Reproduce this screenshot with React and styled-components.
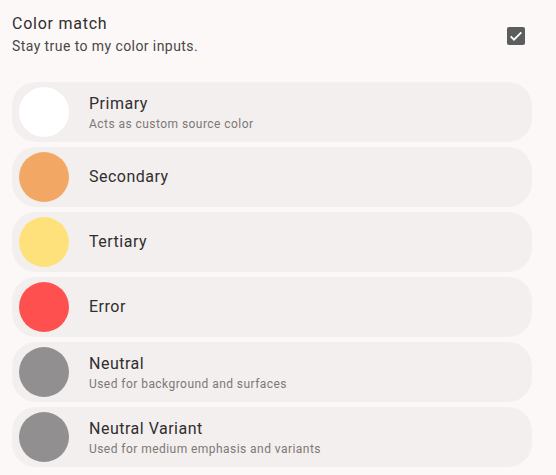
import React from "react";
import styled, { createGlobalStyle } from "styled-components";

const Global = createGlobalStyle`
  html, body { margin: 0; padding: 0; background: #fcf8f7; }
  body { font-family: Roboto, "Noto Sans", sans-serif; }
`;

const Page = styled.div`
  width: 556px;
  height: 475px;
  box-sizing: border-box;
  padding: 12px 24px 0 12px;
  background: #fcf8f7;
  overflow: hidden;
`;

const Header = styled.div`
  display: flex;
  align-items: flex-start;
  justify-content: space-between;
  height: 44px;
  box-sizing: border-box;
  margin-bottom: 26px;
`;

const HeaderText = styled.div`
  display: flex;
  flex-direction: column;
`;

const HeaderTitle = styled.div`
  font-size: 16px;
  line-height: 24px;
  letter-spacing: 0.75px;
  color: #302e2e;
`;

const HeaderSub = styled.div`
  font-size: 14px;
  line-height: 20px;
  letter-spacing: 0.42px;
  color: #4a4646;
`;

const Check = styled.div`
  width: 18px;
  height: 18px;
  margin-top: 15px;
  margin-right: 7px;
  border-radius: 2px;
  background: #5c5e5e;
  display: flex;
  align-items: center;
  justify-content: center;
`;

const List = styled.div`
  display: flex;
  flex-direction: column;
  gap: 5px;
`;

const Row = styled.div`
  display: flex;
  align-items: center;
  height: 60px;
  box-sizing: border-box;
  padding: 0 7px;
  border-radius: 24px;
  background: #f3efee;
`;

const Swatch = styled.div`
  width: 50px;
  height: 50px;
  border-radius: 50%;
  flex-shrink: 0;
  background: ${(p) => p.$color};
`;

const RowText = styled.div`
  display: flex;
  flex-direction: column;
  margin-left: 20px;
`;

const RowTitle = styled.div`
  font-size: 16px;
  line-height: 24px;
  letter-spacing: 0.5px;
  color: #302e2e;
`;

const RowSub = styled.div`
  font-size: 12px;
  line-height: 16px;
  letter-spacing: 0.45px;
  color: #7d7878;
`;

const items = [
  { name: "Primary", sub: "Acts as custom source color", color: "#ffffff" },
  { name: "Secondary", color: "#f2a864" },
  { name: "Tertiary", color: "#ffe17c" },
  { name: "Error", color: "#ff5050" },
  { name: "Neutral", sub: "Used for background and surfaces", color: "#918f8f" },
  { name: "Neutral Variant", sub: "Used for medium emphasis and variants", color: "#918f8f" },
];

export default function App() {
  return (
    <Page>
      <Global />
      <Header>
        <HeaderText>
          <HeaderTitle>Color match</HeaderTitle>
          <HeaderSub>Stay true to my color inputs.</HeaderSub>
        </HeaderText>
        <Check>
          <svg width="16" height="16" viewBox="0 0 24 24">
            <path d="M4 12.5l5 5L20 6.5" fill="none" stroke="#fff" strokeWidth="2.8" />
          </svg>
        </Check>
      </Header>
      <List>
        {items.map((it) => (
          <Row key={it.name}>
            <Swatch $color={it.color} />
            <RowText>
              <RowTitle>{it.name}</RowTitle>
              {it.sub && <RowSub>{it.sub}</RowSub>}
            </RowText>
          </Row>
        ))}
      </List>
    </Page>
  );
}
